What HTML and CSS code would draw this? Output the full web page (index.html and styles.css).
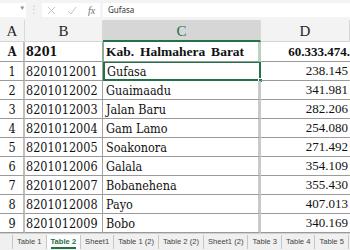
FILE: index.html
```html
<!DOCTYPE html>
<html>
<head>
<meta charset="utf-8">
<link rel="stylesheet" href="styles.css">
</head>
<body>
<div class="app">
  <div class="fbar">
    <div class="namebox"><span class="caret">&#9662;</span></div>
    <div class="dots">&#8942;</div>
    <div class="icons">
      <svg class="ico" width="9" height="9" viewBox="0 0 9 9"><path d="M1 1L8 8M8 1L1 8" stroke="#c4c4c4" stroke-width="1" fill="none"/></svg>
      <svg class="ico" width="10" height="9" viewBox="0 0 10 9"><path d="M1 5L4 8L9 1" stroke="#c4c4c4" stroke-width="1" fill="none"/></svg>
      <span class="fx">fx</span>
    </div>
    <div class="input">Gufasa</div>
  </div>
  <div class="sheet">
    <div class="h ca">A</div>
    <div class="h cb">B</div>
    <div class="h cc sel">C</div>
    <div class="h cd">D</div>

    <div class="c ca b">A</div>
    <div class="c cb b">8201</div>
    <div class="c cc b kab colsel">Kab. Halmahera Barat</div>
    <div class="c cd num bnum">60.333.474.</div>

    <div class="c ca">1</div><div class="c cb">8201012001</div><div class="c cc active">Gufasa<span class="handle"></span></div><div class="c cd num">238.145</div>
    <div class="c ca">2</div><div class="c cb">8201012002</div><div class="c cc">Guaimaadu</div><div class="c cd num">341.981</div>
    <div class="c ca">3</div><div class="c cb">8201012003</div><div class="c cc">Jalan Baru</div><div class="c cd num">282.206</div>
    <div class="c ca">4</div><div class="c cb">8201012004</div><div class="c cc">Gam Lamo</div><div class="c cd num">254.080</div>
    <div class="c ca">5</div><div class="c cb">8201012005</div><div class="c cc">Soakonora</div><div class="c cd num">271.492</div>
    <div class="c ca">6</div><div class="c cb">8201012006</div><div class="c cc">Galala</div><div class="c cd num">354.109</div>
    <div class="c ca">7</div><div class="c cb">8201012007</div><div class="c cc">Bobanehena</div><div class="c cd num">355.430</div>
    <div class="c ca">8</div><div class="c cb">8201012008</div><div class="c cc">Payo</div><div class="c cd num">407.013</div>
    <div class="c ca">9</div><div class="c cb">8201012009</div><div class="c cc">Bobo</div><div class="c cd num">340.169</div>
  </div>
  <div class="tabs">
    <div class="tab">Table 1</div>
    <div class="tab on"><span>Table 2</span></div>
    <div class="tab">Sheet1</div>
    <div class="tab">Table 1 (2)</div>
    <div class="tab">Table 2 (2)</div>
    <div class="tab">Sheet1 (2)</div>
    <div class="tab">Table 3</div>
    <div class="tab">Table 4</div>
    <div class="tab">Table 5</div>
  </div>
</div>
</body>
</html>
```

FILE: styles.css
```css
* { box-sizing: border-box; }
html, body { margin: 0; padding: 0; background: #ffffff; }
.app { width: 350px; height: 250px; overflow: hidden; display: flex; flex-direction: column; }

.fbar { height: 20px; background: #f3f3f3; display: flex; align-items: flex-start; padding-top: 3px; flex: none; }
.namebox { width: 26px; height: 14px; background: #ffffff; position: relative; }
.caret { position: absolute; right: 2px; top: 1px; font-size: 7px; color: #8a8a8a; font-family: "DejaVu Sans", sans-serif; }
.dots { width: 16px; height: 14px; text-align: center; color: #c8c8c8; font-size: 10px; line-height: 14px; font-family: "DejaVu Sans", sans-serif; }
.icons { width: 58px; height: 14px; background: #ffffff; display: flex; align-items: center; padding-left: 5px; gap: 11px; }
.fx { font-family: "Liberation Serif", serif; font-style: italic; font-size: 10px; color: #707070; }
.input { flex: 1; margin-left: 3px; height: 14px; background: #ffffff; font-family: "Noto Sans", sans-serif; font-size: 8px; line-height: 14px; color: #333333; padding-left: 5px; }

.sheet { display: grid; grid-template-columns: 25px 78px 158px 89px; grid-template-rows: 22px 20px repeat(9, 19px); flex: none; }
.h { background: #f3f3f3; font-family: "Liberation Serif", serif; font-size: 15px; color: #262626; display: flex; align-items: center; justify-content: center; border-bottom: 1px solid #d4d4d4; border-right: 1px solid #d9d9d9; padding-top: 2px; }
.h.sel { background: #d6d6d6; color: #217346; border-bottom: 2px solid #217346; }

.c { font-family: "DejaVu Serif Condensed", "DejaVu Serif", serif; font-stretch: condensed; font-size: 12.5px; color: #111111; display: flex; align-items: center; border-bottom: 1px solid #9a9a9a; white-space: nowrap; overflow: hidden; position: relative; }
.c.ca { justify-content: center; border-right: 2px solid #bfbfbf; padding-left: 1px; }
.c.cb { padding-left: 1px; border-right: 1px solid #a3a3a3; }
.c.cc { padding-left: 3px; border-right: 3px solid #c9c9c9; }
.c.cd { justify-content: flex-end; padding-right: 2px; }
.c.b { font-weight: bold; }
.c.kab { font-family: "Liberation Serif", serif; font-size: 13.5px; word-spacing: 2.5px; }
.c.num { font-family: "Liberation Serif", serif; font-size: 13px; font-stretch: normal; }
.c.bnum { font-weight: bold; padding-right: 0; }
.c.colsel { border-left: 1px solid #7fb090; border-right: 3px solid #b9d3c1; padding-left: 2px; }
.c.active { border: 2px solid #217346; border-top-width: 1px; padding-left: 2px; overflow: visible; }
.handle { position: absolute; right: -4px; bottom: -4px; width: 5px; height: 5px; background: #217346; border: 1px solid #ffffff; }

.tabs { flex: 1; background: #f0f0f0; border-top: 1px solid #d0d0d0; display: flex; align-items: flex-start; padding-left: 12px; padding-top: 1px; }
.tab { font-family: "Liberation Sans", sans-serif; font-size: 7.6px; color: #444444; padding: 0 4px; height: 14px; line-height: 13px; border-left: 1px solid #c6c6c6; white-space: nowrap; }
.tab:last-child { border-right: 1px solid #c6c6c6; }
.tab.on { background: #ffffff; color: #217346; font-weight: bold; }
.tab.on span { border-bottom: 2px solid #217346; display: inline-block; line-height: 11px; }
```
